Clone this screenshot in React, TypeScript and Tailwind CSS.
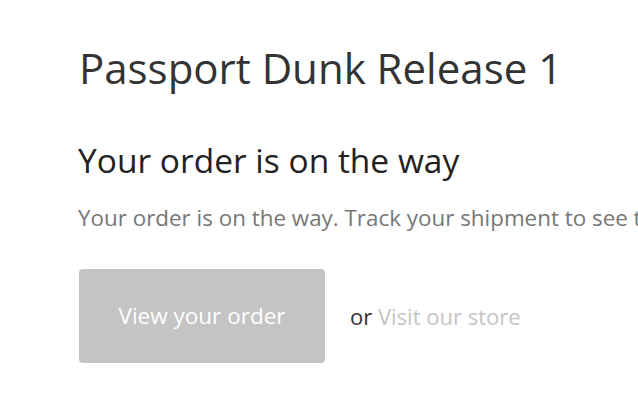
import React from 'react';

const App: React.FC = () => {
  return (
    <div
      className="w-[638px] h-[404px] overflow-hidden bg-white"
      style={{ fontFamily: '"Open Sans", "Noto Sans", sans-serif' }}
    >
      <div className="pl-[79px] pt-[40px] whitespace-nowrap">
        <h1 className="text-[42px] leading-[56px] text-[#333333] font-normal">
          Passport Dunk Release 1
        </h1>
        <h2 className="mt-[42px] text-[33.5px] leading-[44px] text-[#222222] font-normal -ml-[1px]">
          Your order is on the way
        </h2>
        <p className="mt-[22px] text-[22.4px] leading-[28px] text-[#777777] -ml-[1px]">
          Your order is on the way. Track your shipment to see the delivery status.
        </p>
        <div className="mt-[37px] flex items-center">
          <a
            href="#"
            className="flex items-center justify-center w-[246px] h-[94px] rounded-[4px] bg-[#c4c4c4] text-white text-[22.5px]"
          >
            View your order
          </a>
          <span className="ml-[25px] text-[22px] text-[#333333]">
            or <a href="#" className="text-[#c4c4c4]">Visit our store</a>
          </span>
        </div>
      </div>
    </div>
  );
};

export default App;
